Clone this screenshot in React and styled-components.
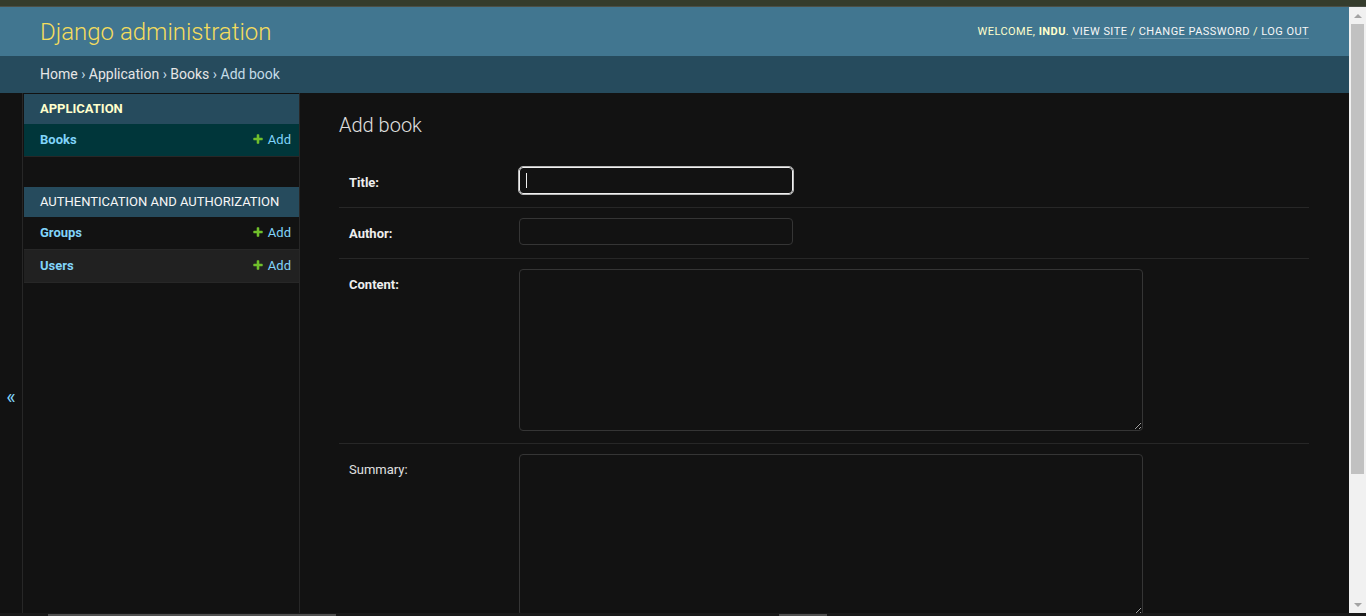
import React from "react";
import styled, { createGlobalStyle } from "styled-components";

const GlobalStyle = createGlobalStyle`
    html, body {
        margin: 0;
        padding: 0;
        height: 616px;
        overflow: hidden;
        background: #121212;
    }
    * {
        box-sizing: border-box;
    }
    body {
        font-family: Roboto, "Noto Sans", "Liberation Sans", sans-serif;
        font-size: 14px;
        color: #eeeeee;
        color-scheme: dark;
    }
`;

const Frame = styled.div`
    display: flex;
    flex-direction: column;
    height: 616px;
    width: 1366px;
    overflow: hidden;
`;

const TopStrip = styled.div`
    flex: 0 0 7px;
    background: #353c2c;
    border-bottom: 1px solid #4b4f46;
`;

const Window = styled.div`
    flex: 1;
    display: flex;
    min-height: 0;
`;

const Page = styled.div`
    flex: 1;
    display: flex;
    flex-direction: column;
    min-width: 0;
    overflow: hidden;
    background: #121212;
`;

const Header = styled.header`
    display: flex;
    align-items: center;
    justify-content: space-between;
    min-height: 49px;
    padding: 10px 40px;
    background: #417690;
`;

const Branding = styled.h1`
    margin: 0;
    font-size: 24px;
    font-weight: 300;
    color: #f5dd5d;
`;

const UserTools = styled.div`
    font-size: 11px;
    letter-spacing: 0.45px;
    text-transform: uppercase;
    color: #ffffcc;
    margin-bottom: 1px;

    strong {
        font-weight: 700;
    }

    a {
        color: #f7f7f7;
        text-decoration: none;
        border-bottom: 1px solid rgba(255, 255, 255, 0.25);
    }
`;

const Breadcrumbs = styled.nav`
    padding: 10px 40px;
    background: #264b5d;
    color: #c4dce8;
    font-size: 14px;
    min-height: 37px;

    a {
        color: #e6e6e6;
        text-decoration: none;
    }
`;

const Main = styled.div`
    display: flex;
    align-items: stretch;
    flex: 1;
`;

const Toggle = styled.button`
    flex: 0 0 23px;
    width: 23px;
    height: 606px;
    padding: 2px 0 0;
    border: 0;
    border-right: 1px solid #272727;
    background: #121212;
    color: #81d4fa;
    font-family: Roboto, sans-serif;
    font-size: 20px;
    cursor: pointer;
`;

const Sidebar = styled.nav`
    flex: 0 0 277px;
    width: 277px;
    overflow: hidden;
    padding-left: 1px;
    padding-top: 1px;
    border-right: 1px solid #272727;
`;

const Module = styled.table`
    width: 100%;
    border-collapse: collapse;
    margin-bottom: 30px;
`;

const Caption = styled.caption`
    text-align: left;
    white-space: nowrap;
    background: #264b5d;
    padding: 8px 8px 8px 16px;
    line-height: 14px;
    font-size: 13px;
    text-transform: uppercase;
    color: ${(p) => (p.$current ? "#ffffcc" : "#f7f7f7")};
    font-weight: ${(p) => (p.$current ? 700 : 400)};
`;

const ModelRow = styled.tr`
    background: ${(p) => (p.$current ? "#00363a" : p.$alt ? "#212121" : "transparent")};
`;

const ModelName = styled.th`
    text-align: left;
    width: 100%;
    padding: 8px 8px 8px 16px;
    font-size: 13px;
    line-height: 16px;
    font-weight: 700;
    border-bottom: 1px solid #272727;

    a {
        color: #81d4fa;
        text-decoration: none;
    }
`;

const AddCell = styled.td`
    white-space: nowrap;
    padding: 8px;
    font-size: 13px;
    line-height: 16px;
    border-bottom: 1px solid #272727;
`;

const AddLink = styled.a`
    color: #81d4fa;
    text-decoration: none;

    svg {
        width: 12px;
        height: 12px;
        margin-right: 4px;
        vertical-align: -1px;
    }
`;

const Content = styled.div`
    flex: 1;
    min-width: 0;
    padding: 20px 40px 20px 39px;
`;

const Title = styled.h1`
    margin: 0 0 20px;
    font-size: 20px;
    font-weight: 300;
    color: #e0e0e0;
`;

const Fieldset = styled.fieldset`
    margin: 0;
    padding: 0;
    border: 0;
`;

const FormRow = styled.div`
    display: flex;
    align-items: flex-start;
    padding: 10px 10px ${(p) => (p.$tall ? 12 : 13)}px;
    border-bottom: 1px solid #272727;
    font-size: 13px;
`;

const Label = styled.label`
    flex: 0 0 170px;
    height: 27px;
    padding: 2px 10px 0 0;
    line-height: 27px;
    font-weight: ${(p) => (p.$required ? 700 : 400)};
    color: ${(p) => (p.$required ? "#eeeeee" : "#e0e0e0")};
`;

const FieldWrap = styled.div`
    position: relative;
`;

const TextInput = styled.input`
    display: block;
    width: 274px;
    height: 27px;
    padding: 5px 6px;
    border: 1px solid ${(p) => (p.$focused ? "#f0f0f0" : "#353535")};
    border-radius: 4px;
    background: #121212;
    color: #eeeeee;
    font-family: Roboto, sans-serif;
    font-size: 13px;
    outline: ${(p) => (p.$focused ? "1px solid #b8b8b8" : "none")};
    outline-offset: 0;
    caret-color: transparent;
`;

const Caret = styled.span`
    position: absolute;
    left: 7px;
    top: 6px;
    width: 1px;
    height: 15px;
    background: #f0f0f0;
`;

const TextArea = styled.textarea`
    display: block;
    width: 624px;
    height: 162px;
    padding: 5px 6px;
    border: 1px solid #353535;
    border-radius: 4px;
    background: #121212;
    color: #eeeeee;
    font-family: Roboto, sans-serif;
    font-size: 13px;
    resize: both;
    outline: none;
`;

const VScroll = styled.div`
    flex: 0 0 17px;
    display: flex;
    flex-direction: column;
    align-items: center;
    background: #f1f1f1;
    padding: 0 2px;
`;

const ScrollArrow = styled.div`
    flex: 0 0 17px;
    display: flex;
    align-items: center;
    justify-content: center;

    &::before {
        content: "";
        border-left: 4px solid transparent;
        border-right: 4px solid transparent;
        ${(p) =>
            p.$down
                ? "border-top: 4px solid #a3a3a3;"
                : "border-bottom: 4px solid #a3a3a3;"}
    }
`;

const Thumb = styled.div`
    width: 13px;
    height: 450px;
    background: #c1c1c1;
`;

const ScrollTrack = styled.div`
    flex: 1;
`;

const BottomStrip = styled.div`
    flex: 0 0 3px;
    display: flex;
    background: #1a1a1a;
`;

const StripPiece = styled.div`
    height: 2px;
    margin-top: 1px;
    background: #505050;
`;

const StripGap = styled.div`
    flex: 0 0 auto;
`;

function PlusIcon() {
    return (
        <svg viewBox="0 0 1792 1792" aria-hidden="true">
            <path
                fill="#70bf2b"
                d="M1600 796v192q0 40-28 68t-68 28h-416v416q0 40-28 68t-68 28h-192q-40 0-68-28t-28-68v-416h-416q-40 0-68-28t-28-68v-192q0-40 28-68t68-28h416v-416q0-40 28-68t68-28h192q40 0 68 28t28 68v416h416q40 0 68 28t28 68z"
            />
        </svg>
    );
}

const apps = [
    {
        name: "Application",
        current: true,
        models: [{ name: "Books", current: true }],
    },
    {
        name: "Authentication and Authorization",
        models: [{ name: "Groups" }, { name: "Users" }],
    },
];

export default function App() {
    return (
        <>
            <GlobalStyle />
            <Frame>
                <TopStrip />
                <Window>
                    <Page>
                        <Header>
                            <Branding>Django administration</Branding>
                            <UserTools>
                                Welcome, <strong>indu</strong>.{" "}
                                <a href="#">View site</a> /{" "}
                                <a href="#">Change password</a> /{" "}
                                <a href="#">Log out</a>
                            </UserTools>
                        </Header>
                        <Breadcrumbs>
                            <a href="#">Home</a> › <a href="#">Application</a> ›{" "}
                            <a href="#">Books</a> › Add book
                        </Breadcrumbs>
                        <Main>
                            <Toggle>«</Toggle>
                            <Sidebar>
                                {apps.map((app) => (
                                    <Module key={app.name}>
                                        <Caption $current={app.current}>{app.name}</Caption>
                                        <tbody>
                                            {app.models.map((m, i) => (
                                                <ModelRow key={m.name} $current={m.current} $alt={i % 2 === 1}>
                                                    <ModelName scope="row">
                                                        <a href="#">{m.name}</a>
                                                    </ModelName>
                                                    <AddCell>
                                                        <AddLink href="#">
                                                            <PlusIcon />
                                                            Add
                                                        </AddLink>
                                                    </AddCell>
                                                </ModelRow>
                                            ))}
                                        </tbody>
                                    </Module>
                                ))}
                            </Sidebar>
                            <Content>
                                <Title>Add book</Title>
                                <Fieldset>
                                    <FormRow>
                                        <Label $required>Title:</Label>
                                        <FieldWrap>
                                            <TextInput type="text" $focused />
                                            <Caret />
                                        </FieldWrap>
                                    </FormRow>
                                    <FormRow>
                                        <Label $required>Author:</Label>
                                        <TextInput type="text" />
                                    </FormRow>
                                    <FormRow $tall>
                                        <Label $required>Content:</Label>
                                        <TextArea />
                                    </FormRow>
                                    <FormRow $tall>
                                        <Label>Summary:</Label>
                                        <TextArea />
                                    </FormRow>
                                </Fieldset>
                            </Content>
                        </Main>
                    </Page>
                    <VScroll>
                        <ScrollArrow />
                        <Thumb />
                        <ScrollTrack />
                        <ScrollArrow $down />
                    </VScroll>
                </Window>
                <BottomStrip>
                    <StripGap style={{ width: 48 }} />
                    <StripPiece style={{ width: 288 }} />
                    <StripGap style={{ width: 443 }} />
                    <StripPiece style={{ width: 48 }} />
                </BottomStrip>
            </Frame>
        </>
    );
}
